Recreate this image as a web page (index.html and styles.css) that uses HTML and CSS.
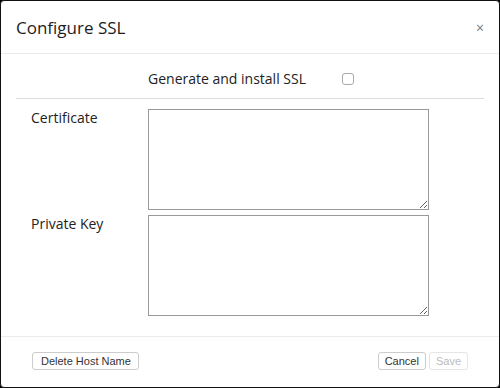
FILE: index.html
```html
<!DOCTYPE html>
<html lang="en">
  <head>
    <meta charset="UTF-8" />
    <title>Configure SSL</title>
    <link rel="stylesheet" href="styles.css">
  </head>
  <body>
    <div class="modal">
      <div class="modal-header">
        <h2>Configure SSL</h2>
        <span class="close">&times;</span>
      </div>
      <div class="modal-body">
        <div class="generate-row">
          <label for="generate">Generate and install SSL</label>
          <input id="generate" type="checkbox" />
        </div>
        <div class="form-row">
          <label for="cert">Certificate</label>
          <textarea id="cert"></textarea>
        </div>
        <div class="form-row">
          <label for="key">Private Key</label>
          <textarea id="key"></textarea>
        </div>
      </div>
      <div class="modal-footer">
        <button class="btn">Delete Host Name</button>
        <div class="actions">
          <button class="btn">Cancel</button>
          <button class="btn" disabled>Save</button>
        </div>
      </div>
    </div>
  </body>
</html>
```

FILE: styles.css
```css
* {
  margin: 0;
  padding: 0;
  box-sizing: border-box;
}

body {
  font-family: "Open Sans", sans-serif;
  color: #222;
  background: #000;
}

.modal {
  width: 500px;
  height: 388px;
  background: #fff;
  border: 1px solid #111;
  border-radius: 4px;
  display: flex;
  flex-direction: column;
}

.modal-header {
  height: 53px;
  display: flex;
  align-items: center;
  justify-content: space-between;
  padding: 0 16px 0 15px;
  border-bottom: 1px solid #e9ecef;
}

.modal-header h2 {
  font-size: 17px;
  font-weight: 400;
  color: #1d1d1d;
}

.close {
  font-size: 14px;
  color: #777;
  margin-right: -1px;
}

.modal-body {
  flex: 1;
  padding: 0 15px;
}

.generate-row {
  display: flex;
  align-items: center;
  height: 45px;
  padding: 5px 0 0 132px;
  border-bottom: 1px solid #dcdcdc;
  font-size: 14px;
}

.generate-row input {
  width: 12px;
  height: 12px;
  margin-left: 36px;
  appearance: none;
  border: 1px solid #aaa;
  border-radius: 3px;
}

.form-row {
  display: flex;
  padding-left: 15px;
  margin-top: 10px;
}

.form-row + .form-row {
  margin-top: 5px;
}

.form-row label {
  width: 117px;
  font-size: 14px;
  margin-top: -1px;
}

.form-row textarea {
  width: 281px;
  height: 101px;
  border: 1px solid #999;
  border-radius: 0;
  resize: vertical;
}

.modal-footer {
  height: 51px;
  display: flex;
  align-items: center;
  justify-content: space-between;
  padding: 0 31px 2px 31px;
  border-top: 1px solid #e9ecef;
}

.actions {
  display: flex;
  gap: 3px;
}

.btn {
  font-family: "Liberation Sans", sans-serif;
  font-size: 11px;
  color: #333;
  background: #fff;
  border: 1px solid #ccc;
  border-radius: 3px;
  padding: 2px 6px;
  height: 18px;
}

.btn:first-child {
  padding: 2px 7px 2px 8px;
}

.actions .btn:first-child {
  padding: 2px 6px;
}

.btn:disabled {
  color: #bbb;
  border-color: #e5e5e5;
}
```
